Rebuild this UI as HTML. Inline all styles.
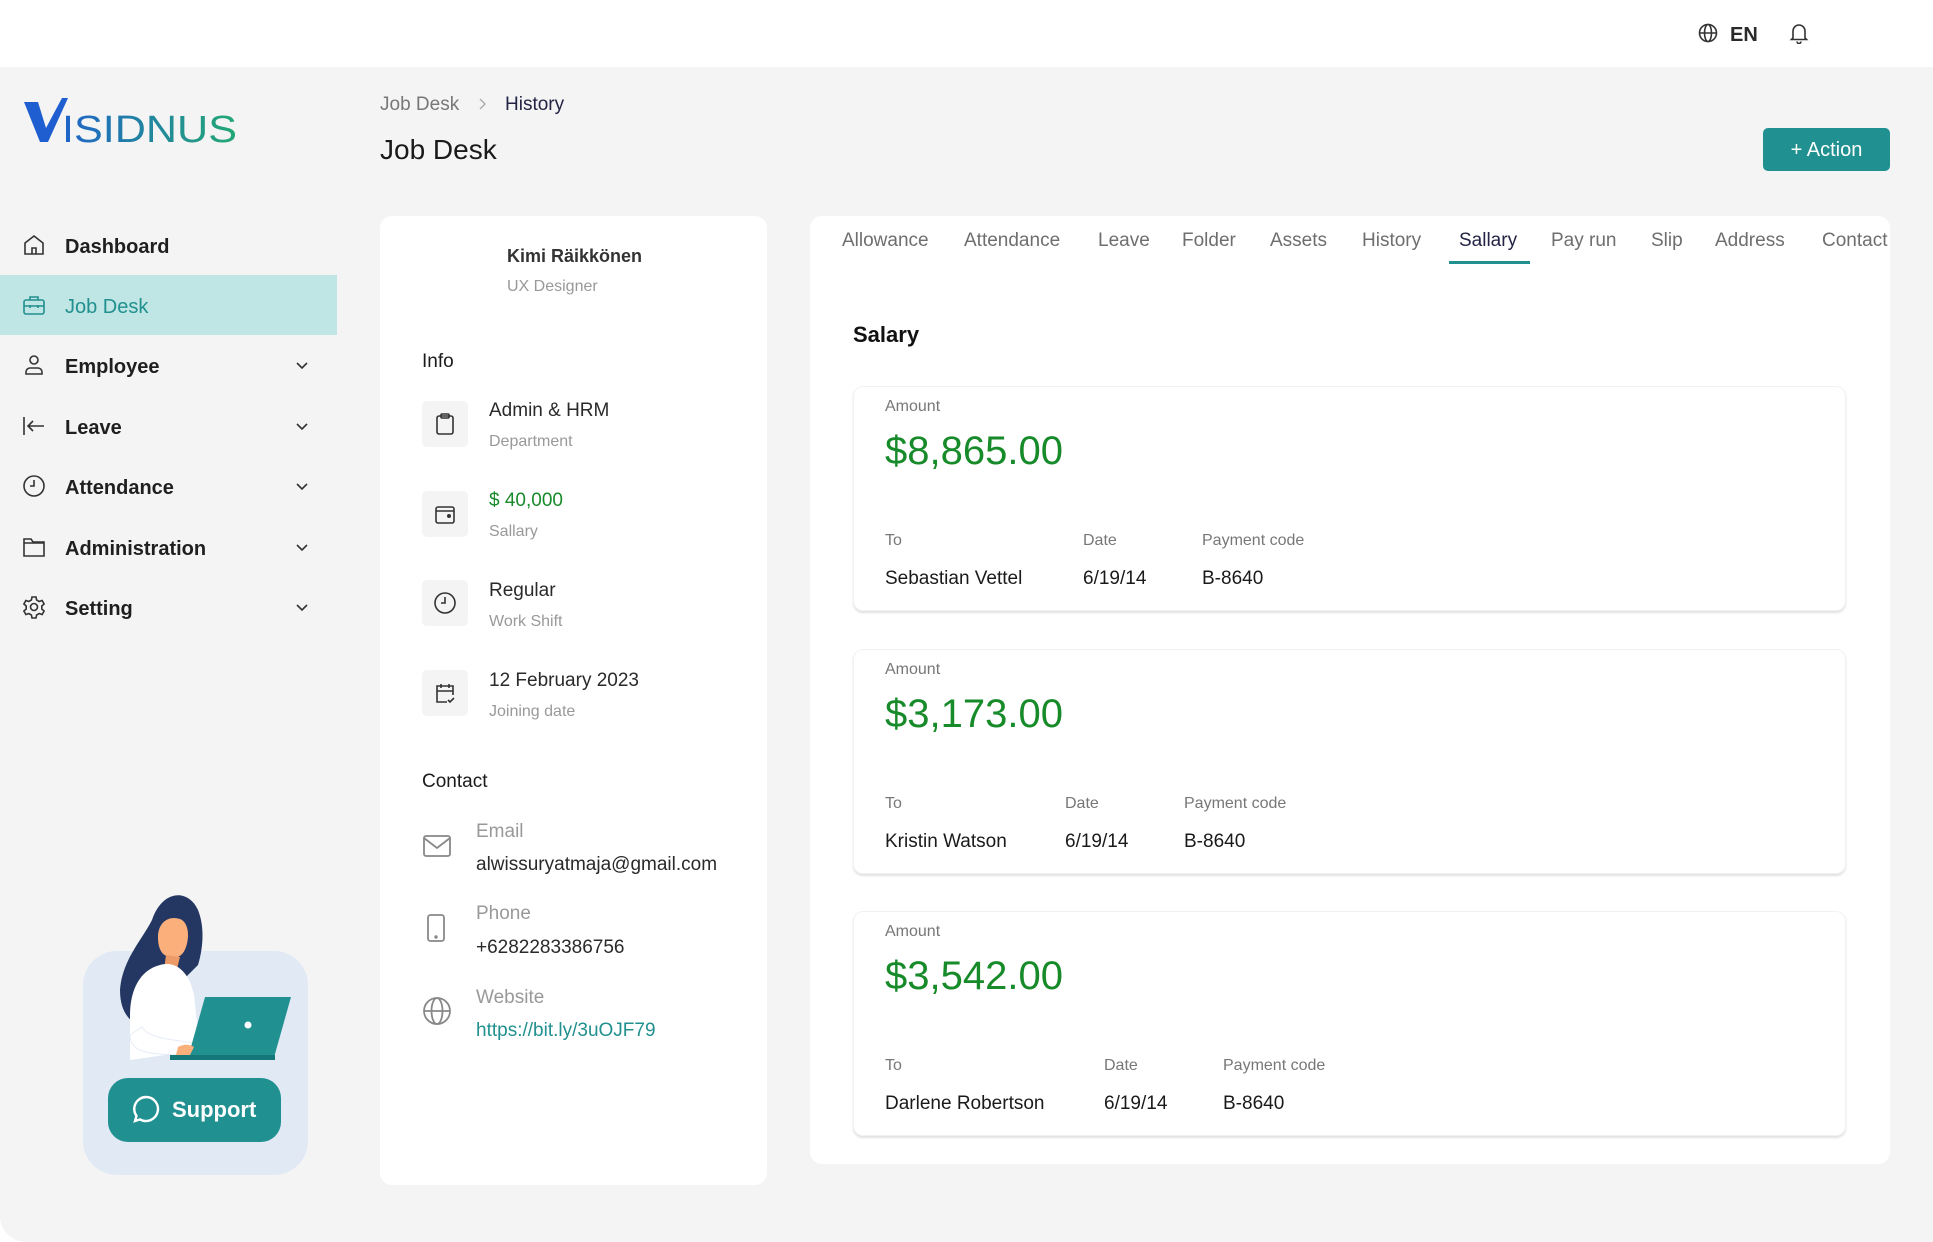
<!DOCTYPE html>
<html><head><meta charset="utf-8">
<style>
*{box-sizing:border-box;margin:0;padding:0}
body{width:1933px;height:1242px;background:#fff;font-family:"Liberation Sans",sans-serif;color:#1f1f1f;position:relative;overflow:hidden}
.a{position:absolute;white-space:nowrap}
.bg{position:absolute;left:0;top:67px;width:1933px;height:1175px;background:#f4f4f4;border-bottom-left-radius:26px}
.nav{position:absolute;left:0;width:337px;height:60px}
.nav .t{position:absolute;left:65px;top:2px;line-height:60px;font-size:20px;font-weight:bold;color:#1f1f1f}
.nav svg.i{position:absolute;left:22px;top:18px}
.nav svg.c{position:absolute;left:295px;top:26px}
.card{position:absolute;background:#fff;border-radius:12px}
.ib{position:absolute;left:422px;width:46px;height:46px;background:#f4f4f4;border-radius:5px}
.ib svg{position:absolute;left:11px;top:11px}
.tt{font-size:19px;color:#2a2a2a}
.st{font-size:16px;color:#999}
.tab{position:absolute;top:230px;font-size:19px;color:#6e6e6e}
.sc{position:absolute;left:853px;width:993px;height:225px;background:#fff;border-radius:10px;border:1px solid #f2f2f2;box-shadow:0 2px 2px rgba(0,0,0,.12)}
.sc .l{position:absolute;font-size:16px;color:#777;top:11px}
.sc .v{position:absolute;font-size:19px;color:#1a1a1a}
.sc .amt{position:absolute;left:31px;top:42px;font-size:40px;color:#178a2a}
</style></head><body>
<div class="bg"></div>

<svg class="a" style="left:1698px;top:23px" width="20" height="20" viewBox="0 0 20 20" fill="none" stroke="#333" stroke-width="1.6"><circle cx="10" cy="10" r="8.5"/><ellipse cx="10" cy="10" rx="3.5" ry="8.5"/><path d="M1.5 10h17"/></svg>
<div class="a" style="left:1730px;top:24px;font-size:20px;font-weight:bold;color:#2a2a2a">EN</div>
<svg class="a" style="left:1788px;top:22px" width="22" height="22" viewBox="0 0 22 22" fill="none" stroke="#333" stroke-width="1.6"><path d="M5 16V9a6 6 0 0 1 12 0v7l1.5 1.5h-15z"/><path d="M9 19.5a2 2 0 0 0 4 0"/></svg>

<svg class="a" style="left:24px;top:98px" width="220" height="50" viewBox="0 0 220 50">
<defs><linearGradient id="g" x1="0" x2="1"><stop offset="0" stop-color="#1f63c9"/><stop offset="1" stop-color="#23a874"/></linearGradient></defs>
<polygon points="0,4 14,4 22,30 38,0 44,0 24,44 16,44" fill="#1f5ed1"/>
<text x="38" y="44" font-family="Liberation Sans" font-size="38" fill="url(#g)" textLength="175" lengthAdjust="spacingAndGlyphs">ISIDNUS</text>
</svg>

<div class="nav" style="top:215px"><svg class="i" width="24" height="24" viewBox="0 0 24 24" fill="none" stroke="#333" stroke-width="1.6"><path d="M3 10l9-7 9 7v11H3z"/><path d="M10 21v-6h4v6"/></svg><div class="t">Dashboard</div></div>
<div class="nav" style="top:275px;background:#bfe5e4"><svg class="i" width="24" height="24" viewBox="0 0 24 24" fill="none" stroke="#21908f" stroke-width="1.6"><rect x="2" y="7" width="20" height="14" rx="2"/><path d="M8 7V4h8v3M2 13h20M8 12v3M16 12v3"/></svg><div class="t" style="color:#21908f;font-weight:normal">Job Desk</div></div>
<div class="nav" style="top:335px"><svg class="i" width="24" height="24" viewBox="0 0 24 24" fill="none" stroke="#333" stroke-width="1.6"><circle cx="12" cy="7" r="4"/><path d="M4 21v-2a4 4 0 0 1 4-4h8a4 4 0 0 1 4 4v2z"/></svg><div class="t">Employee</div><svg class="c" width="14" height="10" viewBox="0 0 14 10" fill="none" stroke="#333" stroke-width="1.6"><path d="M2 2l5 5 5-5"/></svg></div>
<div class="nav" style="top:396px"><svg class="i" width="24" height="24" viewBox="0 0 24 24" fill="none" stroke="#333" stroke-width="1.6"><path d="M2 3v18M22 12H6M11 7l-5 5 5 5"/></svg><div class="t">Leave</div><svg class="c" width="14" height="10" viewBox="0 0 14 10" fill="none" stroke="#333" stroke-width="1.6"><path d="M2 2l5 5 5-5"/></svg></div>
<div class="nav" style="top:456px"><svg class="i" width="24" height="24" viewBox="0 0 24 24" fill="none" stroke="#333" stroke-width="1.6"><circle cx="12" cy="12" r="10"/><path d="M12 6v6H8"/></svg><div class="t">Attendance</div><svg class="c" width="14" height="10" viewBox="0 0 14 10" fill="none" stroke="#333" stroke-width="1.6"><path d="M2 2l5 5 5-5"/></svg></div>
<div class="nav" style="top:517px"><svg class="i" width="24" height="24" viewBox="0 0 24 24" fill="none" stroke="#333" stroke-width="1.6"><path d="M2 4h7l2 3h11v14H2z"/><path d="M2 8h20"/></svg><div class="t">Administration</div><svg class="c" width="14" height="10" viewBox="0 0 14 10" fill="none" stroke="#333" stroke-width="1.6"><path d="M2 2l5 5 5-5"/></svg></div>
<div class="nav" style="top:577px"><svg class="i" width="24" height="24" viewBox="0 0 24 24" fill="none" stroke="#333" stroke-width="1.6"><circle cx="12" cy="12" r="3.5"/><path d="M10 2h4l.6 3 2.6 1.5 2.9-1 2 3.5-2.3 2v3l2.3 2-2 3.5-2.9-1-2.6 1.5-.6 3h-4l-.6-3-2.6-1.5-2.9 1-2-3.5 2.3-2v-3l-2.3-2 2-3.5 2.9 1L9.4 5z"/></svg><div class="t">Setting</div><svg class="c" width="14" height="10" viewBox="0 0 14 10" fill="none" stroke="#333" stroke-width="1.6"><path d="M2 2l5 5 5-5"/></svg></div>

<div class="a" style="left:83px;top:951px;width:225px;height:224px;background:#e1e9f5;border-radius:34px"></div>
<svg class="a" style="left:100px;top:885px" width="200" height="175" viewBox="0 0 200 175">
<path d="M52 35c-10 20-30 40-32 70 0 20 8 30 18 35l60-60c6-20 6-40 0-55-10-22-36-20-46 10z" fill="#243762"/>
<path d="M58 52c0-14 10-22 22-18 8 3 10 16 6 28-3 9-9 12-16 10-8-1-12-8-12-20z" fill="#fbb07c"/>
<path d="M66 70l-2 15 12 3 4-16z" fill="#ec9a66"/>
<path d="M30 175V130c0-25 10-45 30-50 18-5 30 10 34 30l6 55z" fill="#fff"/>
<path d="M30 150c0 18 20 20 60 20l4-12c-30-4-46-6-52-16z" fill="#fff" stroke="#e6ecf7"/>
<path d="M105 112h86l-18 64h-86z" fill="#219091"/>
<rect x="70" y="170" width="105" height="5" fill="#147878"/>
<circle cx="148" cy="140" r="3.5" fill="#fff"/>
<path d="M78 162c5-3 12-3 16 0l-4 8h-14z" fill="#fbb07c"/>
</svg>
<div class="a" style="left:108px;top:1078px;width:173px;height:64px;background:#219091;border-radius:20px"></div>
<svg class="a" style="left:131px;top:1094px" width="30" height="30" viewBox="0 0 30 30" fill="none" stroke="#fff" stroke-width="2.4"><path d="M15 3a12 12 0 1 1-6 22.4L4 27l1.5-5A12 12 0 0 1 15 3z"/></svg>
<div class="a" style="left:172px;top:1097px;font-size:22px;font-weight:bold;color:#fff">Support</div>

<div class="a" style="left:380px;top:94px;font-size:19px;color:#777">Job Desk</div>
<svg class="a" style="left:477px;top:97px" width="10" height="14" viewBox="0 0 10 14" fill="none" stroke="#aaa" stroke-width="1.4"><path d="M3 2l5 5-5 5"/></svg>
<div class="a" style="left:505px;top:94px;font-size:19px;color:#232345">History</div>
<div class="a" style="left:380px;top:134px;font-size:28px;color:#1a1a1a">Job Desk</div>
<div class="a" style="left:1763px;top:128px;width:127px;height:43px;background:#219091;border-radius:5px;color:#fff;font-size:20px;line-height:45px;text-align:center">+ Action</div>

<div class="card" style="left:380px;top:216px;width:387px;height:969px"></div>
<div class="a" style="left:507px;top:246px;font-size:18px;font-weight:bold;color:#333">Kimi Räikkönen</div>
<div class="a" style="left:507px;top:278px;font-size:16px;color:#999">UX Designer</div>
<div class="a" style="left:422px;top:351px;font-size:19px;color:#1a1a1a">Info</div>

<div class="ib" style="top:401px"><svg width="24" height="24" viewBox="0 0 24 24" fill="none" stroke="#333" stroke-width="1.6"><rect x="4" y="4" width="16" height="18" rx="2"/><rect x="8" y="2" width="8" height="4" rx="1"/></svg></div>
<div class="a tt" style="left:489px;top:400px">Admin &amp; HRM</div><div class="a st" style="left:489px;top:433px">Department</div>
<div class="ib" style="top:491px"><svg width="24" height="24" viewBox="0 0 24 24" fill="none" stroke="#333" stroke-width="1.6"><rect x="3" y="5" width="18" height="16" rx="2"/><path d="M3 9h18"/><circle cx="16" cy="14" r="1.2" fill="#333"/></svg></div>
<div class="a tt" style="left:489px;top:490px;color:#178a2a">$ 40,000</div><div class="a st" style="left:489px;top:523px">Sallary</div>
<div class="ib" style="top:580px"><svg width="24" height="24" viewBox="0 0 24 24" fill="none" stroke="#333" stroke-width="1.6"><circle cx="12" cy="12" r="10"/><path d="M12 6v6H8"/></svg></div>
<div class="a tt" style="left:489px;top:580px">Regular</div><div class="a st" style="left:489px;top:613px">Work Shift</div>
<div class="ib" style="top:670px"><svg width="24" height="24" viewBox="0 0 24 24" fill="none" stroke="#333" stroke-width="1.6"><path d="M14 21H4V5h16v9M4 10h16M8 3v4M16 3v4M15 19l2 2 4-4"/></svg></div>
<div class="a tt" style="left:489px;top:670px">12 February 2023</div><div class="a st" style="left:489px;top:703px">Joining date</div>

<div class="a" style="left:422px;top:771px;font-size:19px;color:#1a1a1a">Contact</div>
<svg class="a" style="left:422px;top:833px" width="30" height="26" viewBox="0 0 30 26" fill="none" stroke="#888" stroke-width="1.8"><rect x="2" y="3" width="26" height="20" rx="2"/><path d="M2 5l13 10 13-10"/></svg>
<div class="a" style="left:476px;top:821px;font-size:19px;color:#999">Email</div>
<div class="a" style="left:476px;top:854px;font-size:19px;color:#2a2a2a">alwissuryatmaja@gmail.com</div>
<svg class="a" style="left:425px;top:913px" width="24" height="30" viewBox="0 0 24 30" fill="none" stroke="#888" stroke-width="1.8"><rect x="3" y="2" width="16" height="26" rx="2.5"/><circle cx="11" cy="24" r=".8" fill="#888"/></svg>
<div class="a" style="left:476px;top:903px;font-size:19px;color:#999">Phone</div>
<div class="a" style="left:476px;top:937px;font-size:19px;color:#2a2a2a">+6282283386756</div>
<svg class="a" style="left:422px;top:996px" width="30" height="30" viewBox="0 0 30 30" fill="none" stroke="#888" stroke-width="1.8"><circle cx="15" cy="15" r="13"/><ellipse cx="15" cy="15" rx="5.5" ry="13"/><path d="M2 15h26"/></svg>
<div class="a" style="left:476px;top:987px;font-size:19px;color:#999">Website</div>
<div class="a" style="left:476px;top:1020px;font-size:19px;color:#21908f">https://bit.ly/3uOJF79</div>

<div class="card" style="left:810px;top:216px;width:1080px;height:948px"></div>
<div class="tab" style="left:842px">Allowance</div>
<div class="tab" style="left:964px">Attendance</div>
<div class="tab" style="left:1098px">Leave</div>
<div class="tab" style="left:1182px">Folder</div>
<div class="tab" style="left:1270px">Assets</div>
<div class="tab" style="left:1362px">History</div>
<div class="tab" style="left:1459px;color:#232345">Sallary</div>
<div class="tab" style="left:1551px">Pay run</div>
<div class="tab" style="left:1651px">Slip</div>
<div class="tab" style="left:1715px">Address</div>
<div class="tab" style="left:1822px">Contact</div>
<div class="a" style="left:1449px;top:261px;width:81px;height:3px;background:#219091"></div>
<div class="a" style="left:853px;top:322px;font-size:22px;font-weight:bold;color:#111">Salary</div>

<div class="sc" style="top:386px">
<div class="l" style="left:31px">Amount</div><div class="amt">$8,865.00</div>
<div class="l" style="left:31px;top:145px">To</div><div class="l" style="left:229px;top:145px">Date</div><div class="l" style="left:348px;top:145px">Payment code</div>
<div class="v" style="left:31px;top:181px">Sebastian Vettel</div><div class="v" style="left:229px;top:181px">6/19/14</div><div class="v" style="left:348px;top:181px">B-8640</div>
</div>
<div class="sc" style="top:649px">
<div class="l" style="left:31px">Amount</div><div class="amt">$3,173.00</div>
<div class="l" style="left:31px;top:145px">To</div><div class="l" style="left:211px;top:145px">Date</div><div class="l" style="left:330px;top:145px">Payment code</div>
<div class="v" style="left:31px;top:181px">Kristin Watson</div><div class="v" style="left:211px;top:181px">6/19/14</div><div class="v" style="left:330px;top:181px">B-8640</div>
</div>
<div class="sc" style="top:911px">
<div class="l" style="left:31px">Amount</div><div class="amt">$3,542.00</div>
<div class="l" style="left:31px;top:145px">To</div><div class="l" style="left:250px;top:145px">Date</div><div class="l" style="left:369px;top:145px">Payment code</div>
<div class="v" style="left:31px;top:181px">Darlene Robertson</div><div class="v" style="left:250px;top:181px">6/19/14</div><div class="v" style="left:369px;top:181px">B-8640</div>
</div>
</body></html>
